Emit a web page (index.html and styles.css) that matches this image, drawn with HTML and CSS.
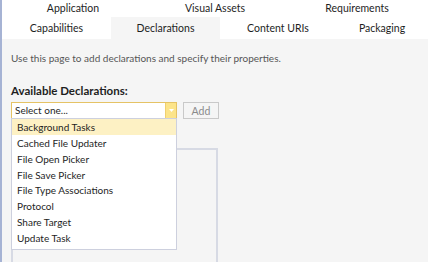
FILE: index.html
```html
<!DOCTYPE html>
<html lang="en">
<head>
  <meta charset="UTF-8">
  <title>Package Manifest - Declarations</title>
  <link rel="stylesheet" href="styles.css">
</head>
<body>
  <div class="designer">
    <div class="tab-row top">
      <div class="tab">Application</div>
      <div class="tab">Visual Assets</div>
      <div class="tab">Requirements</div>
    </div>
    <div class="tab-row bottom">
      <div class="tab">Capabilities</div>
      <div class="tab active">Declarations</div>
      <div class="tab">Content URIs</div>
      <div class="tab">Packaging</div>
    </div>

    <div class="page">
      <p class="intro">Use this page to add declarations and specify their properties.</p>

      <h3 class="label">Available Declarations:</h3>
      <div class="picker-row">
        <div class="combo">
          <span class="combo-text">Select one...</span>
          <span class="combo-arrow">
            <svg width="5" height="3" viewBox="0 0 5 3"><path d="M0 0h5L2.5 3z" fill="#ffffff"/></svg>
          </span>
          <ul class="combo-list">
            <li class="hover">Background Tasks</li>
            <li>Cached File Updater</li>
            <li>File Open Picker</li>
            <li>File Save Picker</li>
            <li>File Type Associations</li>
            <li>Protocol</li>
            <li>Share Target</li>
            <li>Update Task</li>
          </ul>
        </div>
        <button class="add-btn" disabled>Add</button>
      </div>

      <div class="supported"></div>
    </div>
  </div>
</body>
</html>
```

FILE: styles.css
```css
html, body {
  margin: 0;
  height: 100%;
  overflow: hidden;
}

body {
  font-family: 'Lato', 'Open Sans', sans-serif;
  font-size: 10px;
  background: #ffffff;
  color: #1e1e1e;
}

.designer {
  height: 100%;
  border-left: 2px solid #a6b3d4;
  display: flex;
  flex-direction: column;
}

.tab-row {
  display: grid;
  flex-shrink: 0;
  font-size: 10.5px;
}

.tab-row.top {
  grid-template-columns: 1fr 1fr 1fr;
  height: 17px;
}

.tab-row.bottom {
  grid-template-columns: 109px 109px 116px 1fr;
  height: 22px;
}

.tab {
  display: flex;
  align-items: center;
  justify-content: center;
  color: #1e1e1e;
}

.tab-row.top .tab {
  align-items: flex-start;
  padding-top: 2px;
}

.tab.active {
  background: #f5f5f5;
}

.page {
  flex: 1;
  min-height: 0;
  background: #f5f5f5;
  padding: 0 0 0 9px;
}

.intro {
  margin: 11px 0 0;
  color: #555555;
  line-height: 16px;
}

.label {
  margin: 17px 0 0;
  font-size: 11.5px;
  font-weight: bold;
  line-height: 16px;
  color: #1e1e1e;
}

.picker-row {
  display: flex;
  gap: 6px;
  margin-top: 3px;
}

.combo {
  position: relative;
  width: 166px;
  height: 17px;
  box-sizing: border-box;
  border: 1px solid #e5c365;
  background: #ffffff;
  display: flex;
}

.combo-text {
  flex: 1;
  padding-left: 3px;
  line-height: 15px;
}

.combo-arrow {
  width: 10px;
  background: #fce48a;
  border-left: 1px solid #f0d070;
  display: flex;
  align-items: center;
  justify-content: center;
}

.combo-list {
  position: absolute;
  left: -1px;
  top: 15px;
  width: 166px;
  box-sizing: border-box;
  margin: 0;
  padding: 0 0 3px;
  list-style: none;
  background: #ffffff;
  border: 1px solid #cdd0de;
  z-index: 2;
}

.combo-list li {
  height: 15.85px;
  line-height: 16px;
  padding-left: 5px;
}

.combo-list li.hover {
  background: #fdf1c4;
}

.add-btn {
  width: 36px;
  height: 17px;
  padding: 0;
  font-family: inherit;
  font-size: 10.5px;
  color: #8a8a8a;
  background: #f5f5f5;
  border: 1px solid #c9c9c9;
}

.supported {
  margin-top: 29px;
  width: 207px;
  height: 120px;
  box-sizing: border-box;
  border: 2px solid #d7dae4;
}
```
